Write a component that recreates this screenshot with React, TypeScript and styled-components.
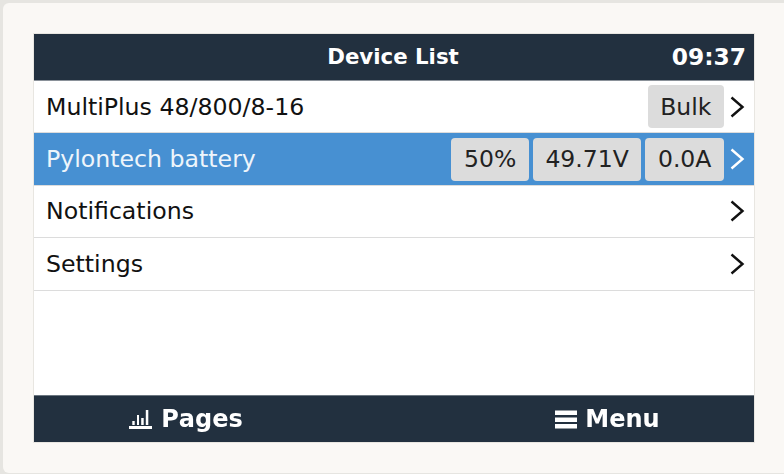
import React from 'react';
import styled, { createGlobalStyle } from 'styled-components';

const GlobalStyle = createGlobalStyle`
  *, *::before, *::after {
    box-sizing: border-box;
  }
  html, body {
    margin: 0;
    padding: 0;
    background: #e6e5e1;
  }
  body {
    width: 784px;
    height: 474px;
    overflow: hidden;
    font-family: "DejaVu Sans", sans-serif;
    font-kerning: none;
  }
`;

const rows = [
  { title: 'MultiPlus 48/800/8-16', badges: ['Bulk'] },
  { title: 'Pylontech battery', badges: ['50%', '49.71V', '0.0A'], selected: true },
  { title: 'Notifications', badges: [] },
  { title: 'Settings', badges: [] },
];

const PagesIcon = () => (
  <svg width="23" height="19" viewBox="0 0 23 19" fill="#fff">
    <rect x="0" y="16" width="23" height="3" />
    <rect x="3.3" y="11" width="2.4" height="4" />
    <rect x="8" y="5" width="2" height="10" />
    <rect x="12.2" y="8" width="2.5" height="7" />
    <rect x="16.8" y="0" width="2.5" height="15" />
  </svg>
);

const MenuIcon = () => (
  <svg width="22" height="19" viewBox="0 0 22 19" fill="#fff">
    <rect x="0" y="0.5" width="22" height="4.5" />
    <rect x="0" y="7.5" width="22" height="4.5" />
    <rect x="0" y="14" width="22" height="4.5" />
  </svg>
);

const Chevron = ({ color }: { color: string }) => (
  <svg width="15" height="22" viewBox="0 0 15 22" fill="none">
    <path d="M1.5 1.5 L12.5 11 L1.5 20.5" stroke={color} strokeWidth="2.4" />
  </svg>
);

const App = () => {
  return (
    <Page>
      <GlobalStyle />
      <Panel>
        <Screen>
          <Header>
            <HeaderTitle>Device List</HeaderTitle>
            <Clock>09:37</Clock>
          </Header>
          <List>
            {rows.map((row) => (
              <Row key={row.title} $selected={row.selected}>
                <RowTitle>{row.title}</RowTitle>
                <Badges>
                  {row.badges.map((badge) => (
                    <Badge key={badge}>{badge}</Badge>
                  ))}
                </Badges>
                <ChevronBox>
                  <Chevron color={row.selected ? '#ffffff' : '#111111'} />
                </ChevronBox>
              </Row>
            ))}
          </List>
          <Footer>
            <PagesButton>
              <PagesIcon />
              Pages
            </PagesButton>
            <MenuButton>
              <MenuIcon />
              Menu
            </MenuButton>
          </Footer>
        </Screen>
      </Panel>
    </Page>
  );
};

export default App;

const Page = styled.div`
  width: 784px;
  height: 474px;
  padding: 3px 0 1px 3px;
`;

const Panel = styled.div`
  height: 100%;
  padding: 31px 30px 31px 31px;
  background: #faf8f5;
  border-radius: 6px 0 0 6px;
`;

const Screen = styled.div`
  display: flex;
  flex-direction: column;
  height: 100%;
  background: #fff;
  box-shadow: 0 0 0 1px #e8e6e1;
  filter: blur(0.35px);
`;

const Header = styled.div`
  position: relative;
  display: flex;
  align-items: center;
  justify-content: center;
  flex: 0 0 47px;
  padding: 0 2px 2px 0;
  background: #22303f;
  border-bottom: 1px solid #8a9199;
  color: #fff;
  font-weight: 700;
`;

const HeaderTitle = styled.span`
  font-size: 21.3px;
`;

const Clock = styled.span`
  position: absolute;
  right: 8px;
  font-size: 23.3px;
`;

const List = styled.div`
  flex: 1;
`;

const Row = styled.div<{ $selected?: boolean }>`
  display: flex;
  align-items: center;
  height: 52.4px;
  padding: 0 9px 0 12px;
  background: ${({ $selected }) => ($selected ? '#4790d2' : '#fff')};
  border-bottom: 1px solid #dcdcdc;
  color: ${({ $selected }) => ($selected ? '#eef5fb' : '#111')};
`;

const RowTitle = styled.span`
  flex: 1;
  font-size: 23.65px;
`;

const Badges = styled.div`
  display: flex;
  gap: 4px;
`;

const Badge = styled.span`
  display: flex;
  align-items: center;
  height: 43px;
  padding: 0 12.6px;
  background: #dcdcdc;
  border-radius: 4px;
  color: #222;
  font-size: 23.5px;
`;

const ChevronBox = styled.div`
  display: flex;
  margin-left: 6px;
`;

const Footer = styled.div`
  display: flex;
  flex: 0 0 47px;
  background: #22303f;
  border-top: 1px solid #6b7680;
`;

const FooterButton = styled.div`
  display: flex;
  flex: 0 0 50%;
  align-items: center;
  justify-content: center;
  color: #fff;
  font-size: 24px;
  font-weight: 700;
`;

const PagesButton = styled(FooterButton)`
  gap: 9px;
  padding-right: 56px;
`;

const MenuButton = styled(FooterButton)`
  gap: 8px;
  padding-left: 67px;
`;
